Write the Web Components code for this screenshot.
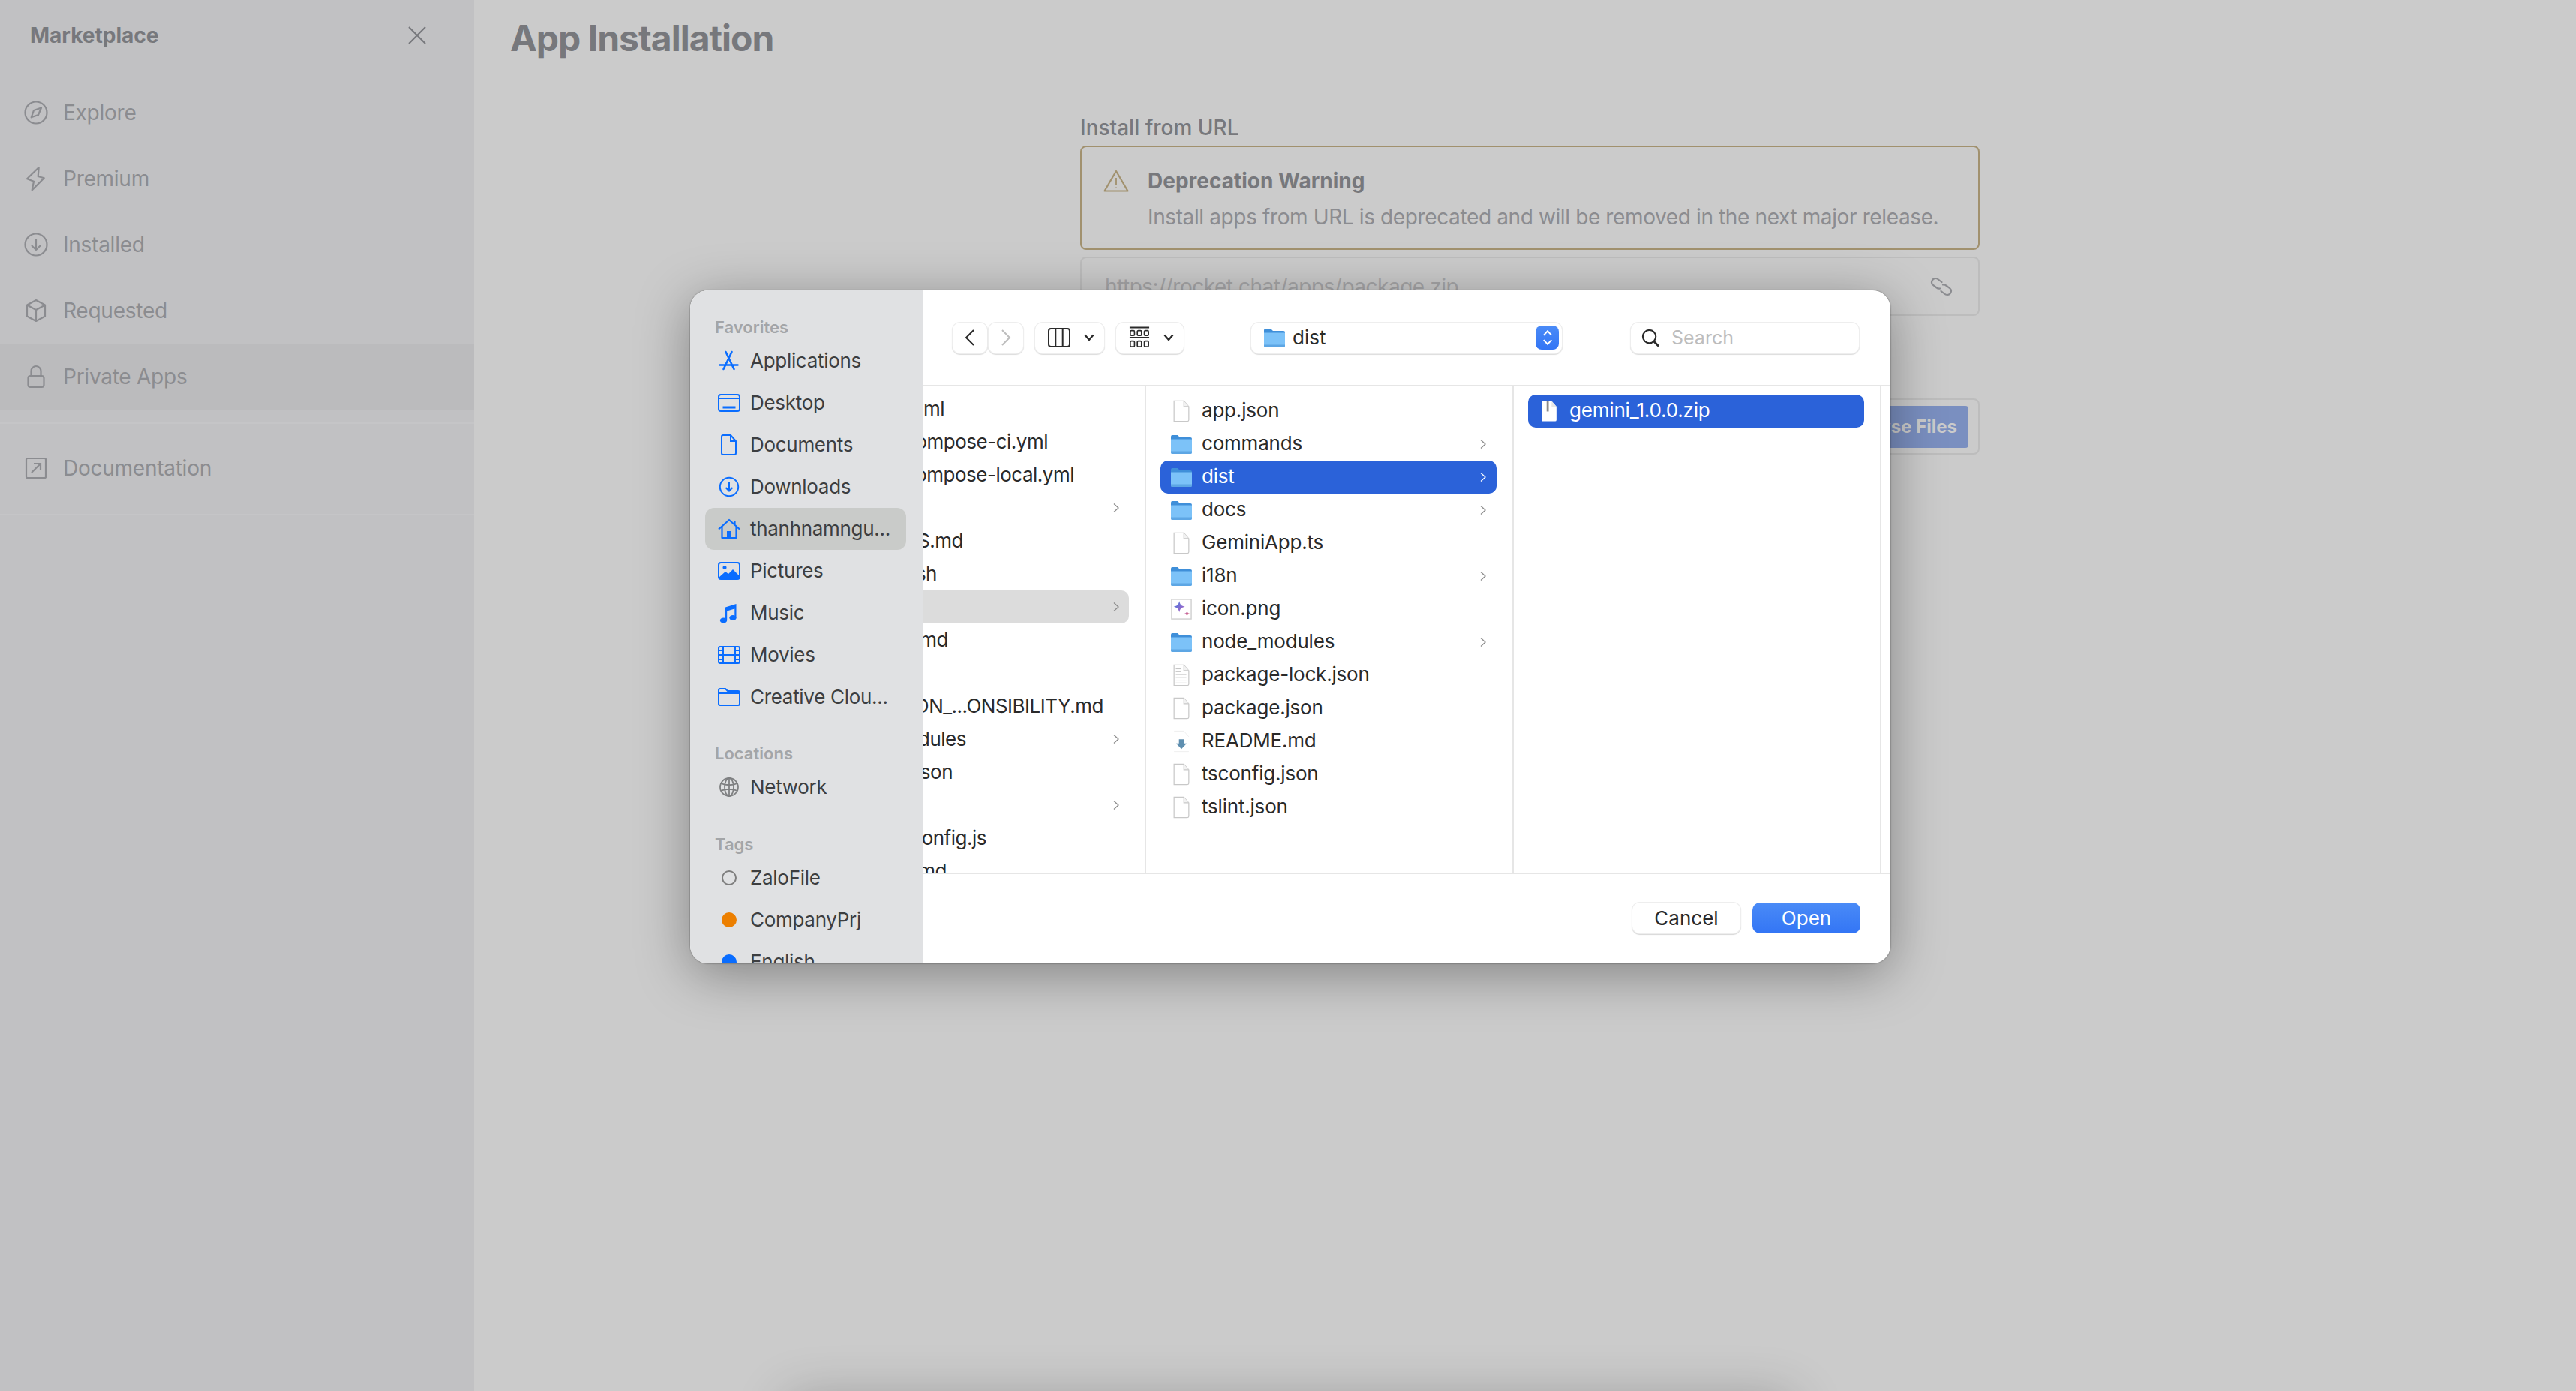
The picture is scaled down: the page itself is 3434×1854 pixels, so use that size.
<!doctype html>
<html lang="en">
<head>
<meta charset="utf-8">
<title>App Installation</title>
<style>
  html, body { margin: 0; width: 3434px; height: 1854px; overflow: hidden; background: #cbcbcb; }
  body { font-family: Inter, "Liberation Sans", sans-serif; }
</style>
</head>
<body>
<rc-page>
  <rc-sidebar slot="sidebar" heading="Marketplace">
    <rc-nav-item icon="compass">Explore</rc-nav-item>
    <rc-nav-item icon="bolt">Premium</rc-nav-item>
    <rc-nav-item icon="install">Installed</rc-nav-item>
    <rc-nav-item icon="cube">Requested</rc-nav-item>
    <rc-nav-item icon="lock" active>Private Apps</rc-nav-item>
    <rc-divider></rc-divider>
    <rc-nav-item icon="external">Documentation</rc-nav-item>
    <rc-divider></rc-divider>
  </rc-sidebar>
  <rc-install-form slot="main" heading="App Installation"></rc-install-form>
  <mac-file-dialog slot="dialog">
    <mac-side-heading>Favorites</mac-side-heading>
    <mac-side-item icon="apps">Applications</mac-side-item>
    <mac-side-item icon="desktop">Desktop</mac-side-item>
    <mac-side-item icon="document">Documents</mac-side-item>
    <mac-side-item icon="download">Downloads</mac-side-item>
    <mac-side-item icon="home" active>thanhnamngu...</mac-side-item>
    <mac-side-item icon="pictures">Pictures</mac-side-item>
    <mac-side-item icon="music">Music</mac-side-item>
    <mac-side-item icon="movies">Movies</mac-side-item>
    <mac-side-item icon="folderline">Creative Clou...</mac-side-item>
    <mac-side-heading style="margin-top:30px">Locations</mac-side-heading>
    <mac-side-item icon="globe">Network</mac-side-item>
    <mac-side-heading style="margin-top:31px">Tags</mac-side-heading>
    <mac-side-item icon="tagempty">ZaloFile</mac-side-item>
    <mac-side-item icon="tagorange">CompanyPrj</mac-side-item>
    <mac-side-item icon="tagblue">English</mac-side-item>
  </mac-file-dialog>
</rc-page>

<script>
// all icons live here, drawn on their own viewBox
const ICONS = {
  compass: '<svg viewBox="0 0 32 32" fill="none" stroke="currentColor" stroke-width="2.200" stroke-linejoin="round"><circle cx="16" cy="16" r="14.500"/><path d="M23 9.500 19 19l-9.300 3.300L13 13z"/></svg>',
  bolt: '<svg viewBox="0 0 32 32" fill="none" stroke="currentColor" stroke-width="2.200" stroke-linejoin="round"><path d="M19.700 1 18.700 13l8 2.300-16 16L13 19.700 4 16.300z"/></svg>',
  install: '<svg viewBox="0 0 32 32" fill="none" stroke="currentColor" stroke-width="2.200"><circle cx="16" cy="16" r="14.500"/><path d="M16 8v15M10 17l6 6 6-6"/></svg>',
  cube: '<svg viewBox="0 0 32 32" fill="none" stroke="currentColor" stroke-width="2.200" stroke-linejoin="round"><path d="M16 2 28 8.500v15L16 30 4 23.500v-15zM4 8.500l12 6.500 12-6.500M16 15v15"/></svg>',
  lock: '<svg viewBox="0 0 32 32" fill="none" stroke="currentColor" stroke-width="2.200"><rect x="5.500" y="15" width="21" height="15" rx="3"/><path d="M9.500 15V8.500a6.500 6.500 0 0 1 13 0V15"/></svg>',
  external: '<svg viewBox="0 0 32 32" fill="none" stroke="currentColor" stroke-width="2.200"><rect x="3" y="3" width="26" height="26" rx="1.500"/><path d="M10 22 22 10M13 10h9v9"/></svg>',
  close: '<svg viewBox="0 0 26 26" fill="none" stroke="currentColor" stroke-width="2"><path d="M2 2l22 22M24 2 2 24"/></svg>',
  warning: '<svg viewBox="0 0 34 30" fill="none" stroke="#a1916e" stroke-width="2.200" stroke-linejoin="round"><path d="M17 2 32.500 28.500h-31z"/><path d="M17 11v9.500M17 23.500v1.500" stroke-width="1.800"/></svg>',
  link: '<svg viewBox="0 0 30 26" fill="none" stroke="currentColor" stroke-width="2.200" stroke-linecap="round"><path d="M13 15.500C11.500 16 10 15.500 8 14L3.500 10.500C.5 8 2.500 2 7 2 9 2 10 2.500 11 3.500L15.500 7"/><path d="M17 10.500C18.500 10 20 10.500 22 12L26.500 15.500C29.500 18 27.500 24 23 24 21 24 20 23.500 19 22.500L14.500 19"/></svg>',

  apps: '<svg viewBox="0 0 30 30" fill="none" stroke="currentColor" stroke-width="2.600" stroke-linecap="round"><path d="M10.500 3 21.500 26M18.500 3 7.500 26M2.500 20.500h24"/></svg>',
  desktop: '<svg viewBox="0 0 30 30" fill="none" stroke="currentColor" stroke-width="2"><rect x="1" y="4" width="28" height="22" rx="3"/><path d="M1 9h28"/><path d="M6.500 19.500h17v3h-17z" fill="currentColor" stroke="none"/></svg>',
  document: '<svg viewBox="0 0 30 30" fill="none" stroke="currentColor" stroke-width="2"><path d="M7 2h10l7 8v16a2 2 0 0 1-2 2H7a2 2 0 0 1-2-2V4a2 2 0 0 1 2-2zM17 2v8h7"/></svg>',
  download: '<svg viewBox="0 0 30 30" fill="none" stroke="currentColor" stroke-width="2"><circle cx="15" cy="15" r="12.200"/><path d="M15 8.500v12M10.500 16l4.500 4.500 4.500-4.500"/></svg>',
  home: '<svg viewBox="0 0 30 30" fill="none" stroke="currentColor" stroke-width="2.200" stroke-linejoin="round"><path d="M1 15.500 15 3l14 12.500M5.500 12.500V27h19V12.500M22.500 10V4.500"/><path d="M12 27v-9h6v9z" fill="currentColor" stroke="none"/></svg>',
  pictures: '<svg viewBox="0 0 30 30"><rect x="1" y="4" width="28" height="22" rx="3" fill="none" stroke="currentColor" stroke-width="2"/><circle cx="9" cy="10.500" r="2.500" fill="currentColor"/><path d="M1.500 23.500 10 16l4 3 6-6 8.500 8.500V24a1.500 1.500 0 0 1-1.500 1.500H3z" fill="currentColor"/></svg>',
  music: '<svg viewBox="0 0 30 30" fill="currentColor"><path d="M10 7.500 24.500 3v18h-2.200V9.500L12.200 12.500V25h-2.200z"/><ellipse cx="7.500" cy="25" rx="4.700" ry="3.500"/><ellipse cx="20" cy="21.500" rx="4.700" ry="3.500"/></svg>',
  movies: '<svg viewBox="0 0 30 30" fill="none" stroke="currentColor" stroke-width="2"><rect x="1" y="4" width="28" height="22" rx="2"/><path d="M7 4v22M23 4v22M7 15h16M1 9h6M1 15h6M1 21h6M23 9h6M23 15h6M23 21h6"/></svg>',
  folderline: '<svg viewBox="0 0 30 30" fill="none" stroke="currentColor" stroke-width="2"><path d="M1 8V6a2 2 0 0 1 2-2h7l3 3h14a2 2 0 0 1 2 2v15a2 2 0 0 1-2 2H3a2 2 0 0 1-2-2zM1 10h28"/></svg>',
  globe: '<svg viewBox="0 0 30 30" fill="none" stroke="#7f8082" stroke-width="1.800"><circle cx="15" cy="15" r="12"/><ellipse cx="15" cy="15" rx="6" ry="12"/><path d="M4 10c6 3 16 3 22 0M4 20c6-3 16-3 22 0M15 3v24"/></svg>',
  tagempty: '<svg viewBox="0 0 30 30"><circle cx="15" cy="15" r="9" fill="none" stroke="#7e7e7e" stroke-width="2"/></svg>',
  tagorange: '<svg viewBox="0 0 30 30"><circle cx="15" cy="15" r="10" fill="#ec7f00"/></svg>',
  tagblue: '<svg viewBox="0 0 30 30"><circle cx="15" cy="15" r="10" fill="#0a6dff"/></svg>',

  folder: '<svg viewBox="0 0 28 28"><path d="M0 4a2 2 0 0 1 2-2h7l3 3h14a2 2 0 0 1 2 2v6H0z" fill="#3f8fd9"/><path d="M0 7.500h28V25a2 2 0 0 1-2 2H2a2 2 0 0 1-2-2z" fill="#7cc2f8"/><path d="M0 23.500h28V25a2 2 0 0 1-2 2H2a2 2 0 0 1-2-2z" fill="#5da6e4"/></svg>',
  file: '<svg viewBox="0 0 28 32"><path d="M3.500 1.500h14l7 8v19a2 2 0 0 1-2 2h-19z" fill="#fff" stroke="#c8c8c8" stroke-width="1.300"/><path d="M17.500 1.500v8h7" fill="#f2f2f2" stroke="#c8c8c8" stroke-width="1.300"/></svg>',
  filelines: '<svg viewBox="0 0 28 32"><path d="M3.500 1.500h14l7 8v19a2 2 0 0 1-2 2h-19z" fill="#fff" stroke="#c8c8c8" stroke-width="1.300"/><path d="M17.500 1.500v8h7" fill="#f2f2f2" stroke="#c8c8c8" stroke-width="1.300"/><path d="M6 7h8M6 11h8M6 15h15M6 19h15M6 23h15M6 27h15" stroke="#bcbcbc" stroke-width="1"/></svg>',
  readme: '<svg viewBox="0 0 28 32"><path d="M3.500 1.500h14l7 8" fill="none" stroke="#eee" stroke-width="1"/><path d="M3.500 30.500h21" stroke="#eee" stroke-width="1"/><path d="M10.500 13h7v6h4L14 27l-7.500-8h4z" fill="#5f8fb0"/></svg>',
  image: '<svg viewBox="0 0 30 30"><defs><linearGradient id="g" x1="0" y1="0" x2="1" y2="1"><stop offset="0" stop-color="#3d7be0"/><stop offset=".6" stop-color="#a765c8"/><stop offset="1" stop-color="#e86a6a"/></linearGradient></defs><rect x="1" y="1" width="28" height="28" fill="#fff" stroke="#cfcfcf" stroke-width="1.500"/><path d="M12 3.500c1 5 3 7 8 8-5 1-7 3-8 8-1-5-3-7-8-8 5-1 7-3 8-8zM23 17.500c.5 2.500 1.500 3.500 4 4-2.500.5-3.500 1.500-4 4-.5-2.500-1.500-3.500-4-4 2.500-.5 3.500-1.500 4-4z" fill="url(#g)"/></svg>',
  zip: '<svg viewBox="0 0 28 32"><path d="M3.500 1.500h14l7 8v19a2 2 0 0 1-2 2h-19z" fill="#fff"/><path d="M17.500 1.500v8h7" fill="#e6e6e6"/><path d="M10.500 1.500h3v15h-3z" fill="#8a8a8a"/></svg>',
  chevron: '<svg viewBox="0 0 8 14" fill="none" stroke="currentColor" stroke-width="1.300"><path d="M1 1.500 7 7l-6 5.500"/></svg>',
  back: '<svg viewBox="0 0 14 24" fill="none" stroke="currentColor" stroke-width="2"><path d="M12 2 2 12l10 10"/></svg>',
  forward: '<svg viewBox="0 0 14 24" fill="none" stroke="currentColor" stroke-width="2"><path d="M2 2l10 10L2 22"/></svg>',
  columns: '<svg viewBox="0 0 30 26" fill="none" stroke="currentColor" stroke-width="2"><rect x="1" y="1" width="28" height="24" rx="3"/><path d="M10.300 1v24M19.700 1v24"/></svg>',
  grid: '<svg viewBox="0 0 30 32" fill="none" stroke="currentColor" stroke-width="1.800"><path d="M1 1.500h28M1 16h28" stroke-width="2"/><rect x="2" y="6" width="6" height="7" rx="1.500"/><rect x="12" y="6" width="6" height="7" rx="1.500"/><rect x="22" y="6" width="6" height="7" rx="1.500"/><rect x="2" y="21" width="6" height="8" rx="1.500"/><rect x="12" y="21" width="6" height="8" rx="1.500"/><rect x="22" y="21" width="6" height="8" rx="1.500"/></svg>',
  caret: '<svg viewBox="0 0 14 10" fill="none" stroke="currentColor" stroke-width="2.400"><path d="M1.500 1.500 7 8l5.500-6.500"/></svg>',
  search: '<svg viewBox="0 0 26 26" fill="none" stroke="#2a2a2a" stroke-width="2.200"><circle cx="11" cy="11" r="9"/><path d="M17 17.500l7 7" stroke-width="3"/></svg>',
  stepper: '<svg viewBox="0 0 16 26" fill="none" stroke="#fff" stroke-width="2.200"><path d="M2 9.500 8 3l6 6.500M2 16.500 8 23l6-6.500"/></svg>'
};

function iconSvg(name) {
  return ICONS[name] || '';
}

// small helper so each element below stays a short class
function shadow(el, html) {
  el.attachShadow({ mode: 'open' }).innerHTML = html;
}

class RcPage extends HTMLElement {
  constructor() {
    super();
    shadow(this, `
      <style>
        :host { display: flex; position: relative; width: 3434px; height: 1854px; overflow: hidden; background: #cbcbcb; }
        .main { flex: 1; min-width: 0; }
        .dialog { position: absolute; left: 920px; top: 387px; }
        /* blurred window edge coming up from below the visible area */
        .peek { position: absolute; left: 1070px; top: 1884px; width: 1300px; height: 60px; box-shadow: 0 0 70px 20px rgba(0,0,0,.24); background: rgba(0,0,0,.24); }
      </style>
      <slot name="sidebar"></slot>
      <div class="main"><slot name="main"></slot></div>
      <div class="peek"></div>
      <div class="dialog"><slot name="dialog"></slot></div>
    `);
  }
}

class RcSidebar extends HTMLElement {
  constructor() {
    super();
    shadow(this, `
      <style>
        :host { display: block; width: 632px; height: 100%; background: #c1c1c3; flex: none; }
        header { height: 94px; display: flex; align-items: center; justify-content: space-between; padding: 0 63px 0 40px; margin-bottom: 12px;
          font-size: 28px; font-weight: 700; color: #77787c; }
        svg { display: block; width: 26px; height: 26px; color: #77787c; }
      </style>
      <header><span>${this.getAttribute('heading') || ''}</span>${iconSvg('close')}</header>
      <slot></slot>
    `);
  }
}

class RcNavItem extends HTMLElement {
  constructor() {
    super();
    shadow(this, `
      <style>
        :host { display: flex; align-items: center; height: 88px; padding-left: 32px; gap: 20px; font-size: 28px; letter-spacing: -.25px; color: #8b8c90; }
        :host([active]) { background: #bbbbbd; }
        svg { display: block; width: 32px; height: 32px; }
      </style>
      ${iconSvg(this.getAttribute('icon'))}<slot></slot>
    `);
  }
}

class RcDivider extends HTMLElement {
  constructor() {
    super();
    shadow(this, `<style>:host { display: block; height: 2px; margin: 17px 0 15px; background: #c5c5c7; }</style>`);
  }
}

class RcInstallForm extends HTMLElement {
  constructor() {
    super();
    shadow(this, `
      <style>
        :host { display: block; color: #77787c; }
        h1 { margin: 0; height: 100px; display: flex; align-items: center; padding-left: 48px; font-size: 48px; font-weight: 700; letter-spacing: -1px; }
        .form { width: 1199px; margin: 50px 0 0 808px; }
        label { display: block; height: 40px; line-height: 40px; font-size: 28px; font-weight: 500; margin-bottom: 4px; }
        .warn { box-sizing: border-box; height: 139px; border: 2px solid #a1916e; border-radius: 8px; display: flex; padding: 27px 28px 0 29px; gap: 25px; }
        .warn svg { width: 34px; height: 30px; flex: none; margin-top: 3px; }
        .warn b { display: block; font-size: 28px; line-height: 36px; font-weight: 700; }
        .warn span { display: block; font-size: 28px; line-height: 36px; margin-top: 12px; color: #8b8c90; letter-spacing: -.38px; white-space: nowrap; }
        .url { box-sizing: border-box; height: 79px; margin-top: 9px; border: 2px solid #bdbdbd; border-radius: 8px; display: flex; align-items: center; justify-content: space-between;
          padding: 0 34px 0 31px; font-size: 28px; letter-spacing: -.5px; color: #a6a6a8; }
        .url svg { width: 30px; height: 26px; color: #8b8c90; }
        .upload { box-sizing: border-box; height: 75px; margin-top: 110px; border: 2px solid #bdbdbd; border-radius: 8px; display: flex; align-items: center; justify-content: flex-end; padding-right: 13px; }
        button { all: unset; height: 56px; padding: 0 15px; display: flex; align-items: center; background: #7a8fc0; border-radius: 4px; font-size: 24px; font-weight: 700; color: #cbcbcb; font-family: inherit; }
      </style>
      <h1>${this.getAttribute('heading') || ''}</h1>
      <div class="form">
        <label>Install from URL</label>
        <div class="warn">${iconSvg('warning')}<div><b>Deprecation Warning</b><span>Install apps from URL is deprecated and will be removed in the next major release.</span></div></div>
        <div class="url"><span>https://rocket.chat/apps/package.zip</span>${iconSvg('link')}</div>
        <div class="upload"><button>Browse Files</button></div>
      </div>
    `);
  }
}

class MacFileDialog extends HTMLElement {
  constructor() {
    super();
    shadow(this, `
      <style>
        :host { display: block; width: 1600px; height: 897px; border-radius: 24px; box-shadow: 0 0 2px rgba(0,0,0,.55), 0 14px 70px rgba(0,0,0,.36); }
        .win { display: flex; width: 100%; height: 100%; border-radius: 24px; overflow: hidden; background: #fff; color: #2a2a2a; font-size: 26px; }
        aside { width: 310px; flex: none; box-sizing: border-box; padding-top: 32px; background: #e0e1e3; overflow: hidden; }
        .right { flex: 1; min-width: 0; display: flex; flex-direction: column; }
        .bar { height: 126px; flex: none; box-sizing: border-box; display: flex; align-items: center; padding: 0 42px 0 40px; border-bottom: 0; }
        .rule { height: 2px; background: #e6e6e6; flex: none; }
        .browser { height: 648px; display: flex; flex: none; overflow: hidden; }
        .foot { flex: 1; display: flex; justify-content: flex-end; gap: 16px; padding: 38px 40px 0 0; }
        mac-tool + mac-tool { margin-left: 16px; }
        mac-tool.pair { margin-left: 2px; }
      </style>
      <div class="win">
        <aside><slot></slot></aside>
        <div class="right">
          <div class="bar">
            <mac-tool w="46" icon="back" iw="14" ih="24"></mac-tool>
            <mac-tool class="pair" w="46" icon="forward" iw="14" ih="24" dim></mac-tool>
            <mac-tool w="92" icon="columns" iw="30" ih="26" caret></mac-tool>
            <mac-tool w="90" icon="grid" iw="28" ih="30" caret></mac-tool>
            <mac-path label="dist"></mac-path>
            <mac-search></mac-search>
          </div>
          <div class="rule"></div>
          <div class="browser">
            <mac-column width="298" top="8" pad="0">
              <mac-clip-row end="1259">yml</mac-clip-row>
              <mac-clip-row end="1397">ompose-ci.yml</mac-clip-row>
              <mac-clip-row end="1432">ompose-local.yml</mac-clip-row>
              <mac-clip-row chevron></mac-clip-row>
              <mac-clip-row end="1284">S.md</mac-clip-row>
              <mac-clip-row end="1249">sh</mac-clip-row>
              <mac-clip-row chevron path></mac-clip-row>
              <mac-clip-row end="1264">md</mac-clip-row>
              <mac-clip-row></mac-clip-row>
              <mac-clip-row end="1471">ON_...ONSIBILITY.md</mac-clip-row>
              <mac-clip-row end="1288" chevron>dules</mac-clip-row>
              <mac-clip-row end="1270">son</mac-clip-row>
              <mac-clip-row chevron></mac-clip-row>
              <mac-clip-row end="1315">onfig.js</mac-clip-row>
              <mac-clip-row end="1262">md</mac-clip-row>
            </mac-column>
            <mac-column width="490" top="11" pad="19">
              <mac-file-row icon="file">app.json</mac-file-row>
              <mac-file-row icon="folder" chevron>commands</mac-file-row>
              <mac-file-row icon="folder" chevron selected>dist</mac-file-row>
              <mac-file-row icon="folder" chevron>docs</mac-file-row>
              <mac-file-row icon="file">GeminiApp.ts</mac-file-row>
              <mac-file-row icon="folder" chevron>i18n</mac-file-row>
              <mac-file-row icon="image">icon.png</mac-file-row>
              <mac-file-row icon="folder" chevron>node_modules</mac-file-row>
              <mac-file-row icon="filelines">package-lock.json</mac-file-row>
              <mac-file-row icon="file">package.json</mac-file-row>
              <mac-file-row icon="readme">README.md</mac-file-row>
              <mac-file-row icon="file">tsconfig.json</mac-file-row>
              <mac-file-row icon="file">tslint.json</mac-file-row>
            </mac-column>
            <mac-column width="490" top="11" pad="19">
              <mac-file-row icon="zip" selected>gemini_1.0.0.zip</mac-file-row>
            </mac-column>
          </div>
          <div class="rule"></div>
          <div class="foot">
            <mac-button>Cancel</mac-button>
            <mac-button primary>Open</mac-button>
          </div>
        </div>
      </div>
    `);
  }
}

class MacSideHeading extends HTMLElement {
  constructor() {
    super();
    shadow(this, `<style>:host { display: block; height: 34px; line-height: 34px; padding-left: 33px; font-size: 22px; font-weight: 600; color: #a3a5a8; }</style><slot></slot>`);
  }
}

class MacSideItem extends HTMLElement {
  constructor() {
    super();
    shadow(this, `
      <style>
        :host { display: flex; align-items: center; box-sizing: border-box; width: 268px; height: 56px; margin-left: 20px; padding: 0 0 1px 14px; gap: 10px;
          border-radius: 12px; font-size: 26px; letter-spacing: -.3px; color: #3d3e40; white-space: nowrap; }
        :host([active]) { background: #c9cbc9; }
        span { display: flex; width: 36px; height: 30px; justify-content: center; color: #0a6dff; flex: none; }
        svg { width: 30px; height: 30px; }
      </style>
      <span>${iconSvg(this.getAttribute('icon'))}</span><slot></slot>
    `);
  }
}

class MacTool extends HTMLElement {
  constructor() {
    super();
    const w = this.getAttribute('w');
    const iw = this.getAttribute('iw');
    const ih = this.getAttribute('ih');
    const color = this.hasAttribute('dim') ? '#bdbdbd' : '#2a2a2a';
    const hasCaret = this.hasAttribute('caret');
    shadow(this, `
      <style>
        :host { display: flex; box-sizing: border-box; width: ${w}px; height: 41px; align-items: center; justify-content: ${hasCaret ? 'flex-start' : 'center'}; padding-left: ${hasCaret ? 17 : 0}px; gap: 18px; background: #fff; border-radius: 10px;
          box-shadow: 0 0 0 1px #eeeeee, 0 1px 1px 1px rgba(0,0,0,.14); color: ${color}; flex: none; }
        .i svg { display: block; width: ${iw}px; height: ${ih}px; }
        .c svg { display: block; width: 14px; height: 10px; }
      </style>
      <span class="i">${iconSvg(this.getAttribute('icon'))}</span>
      ${hasCaret ? `<span class="c">${iconSvg('caret')}</span>` : ''}
    `);
  }
}

class MacPath extends HTMLElement {
  constructor() {
    super();
    shadow(this, `
      <style>
        :host { display: flex; box-sizing: border-box; width: 414px; height: 41px; margin-left: 90px; align-items: center; padding: 0 4px 0 17px; gap: 10px; background: #fff; border-radius: 10px;
          box-shadow: 0 0 0 1px #eeeeee, 0 1px 1px 1px rgba(0,0,0,.14); color: #2a2a2a; font-size: 26px; flex: none; }
        .f svg { display: block; width: 28px; height: 28px; }
        .label { flex: 1; padding-bottom: 2px; }
        .step { width: 31px; height: 32px; border-radius: 8px; background: linear-gradient(#4a8bf7, #3375f5); display: flex; align-items: center; justify-content: center; }
        .step svg { width: 14px; height: 24px; }
      </style>
      <span class="f">${iconSvg('folder')}</span><span class="label">${this.getAttribute('label')}</span><span class="step">${iconSvg('stepper')}</span>
    `);
  }
}

class MacSearch extends HTMLElement {
  constructor() {
    super();
    shadow(this, `
      <style>
        :host { display: flex; box-sizing: border-box; width: 304px; height: 41px; margin-left: 92px; align-items: center; padding-left: 14px; gap: 15px; background: #fff; border-radius: 10px;
          box-shadow: 0 0 0 1px #eeeeee, 0 1px 1px 1px rgba(0,0,0,.14); color: #bdbdbd; font-size: 25px; flex: none; }
        svg { display: block; width: 25px; height: 25px; }
      </style>
      ${iconSvg('search')}<span>Search</span>
    `);
  }
}

class MacColumn extends HTMLElement {
  constructor() {
    super();
    const pad = this.getAttribute('pad');
    shadow(this, `
      <style>
        :host { display: block; box-sizing: border-box; width: ${this.getAttribute('width')}px; height: 100%; flex: none; overflow: hidden;
          padding: ${this.getAttribute('top')}px 21px 0 ${pad}px; border-right: 2px solid #e6e6e6; }
      </style>
      <slot></slot>
    `);
  }
}

class MacFileRow extends HTMLElement {
  constructor() {
    super();
    shadow(this, `
      <style>
        :host { display: flex; align-items: center; height: 44px; padding: 0 14px; gap: 13px; border-radius: 10px; font-size: 26px; letter-spacing: -.2px; color: #2a2a2a; white-space: nowrap; }
        :host([selected]) { background: #2b62d9; color: #fff; }
        .i { width: 28px; height: 30px; display: flex; align-items: center; justify-content: center; flex: none; }
        .i svg { display: block; width: 28px; height: 30px; }
        .t { flex: 1; padding-bottom: 3px; }
        .c { display: flex; color: #8a8a8a; }
        :host([selected]) .c { color: #fff; }
        .c svg { display: block; width: 8px; height: 14px; }
      </style>
      <span class="i">${iconSvg(this.getAttribute('icon'))}</span>
      <span class="t"><slot></slot></span>
      ${this.hasAttribute('chevron') ? `<span class="c">${iconSvg('chevron')}</span>` : ''}
    `);
  }
}

// rows of the first column: scrolled under the sidebar, so text is anchored by its right end
class MacClipRow extends HTMLElement {
  constructor() {
    super();
    const end = Number(this.getAttribute('end')) || 1230;
    shadow(this, `
      <style>
        :host { display: flex; align-items: center; height: 44px; padding-right: 13px; font-size: 26px; letter-spacing: -.5px; color: #2a2a2a; white-space: nowrap; border-radius: 0 10px 10px 0; }
        :host([path]) { background: #dcdcdc; }
        .t { width: ${end - 1230}px; display: flex; justify-content: flex-end; flex: none; padding-bottom: 2px; }
        .s { flex: 1; }
        .c { display: flex; color: #8a8a8a; }
        .c svg { display: block; width: 8px; height: 14px; }
      </style>
      <span class="t"><slot></slot></span><span class="s"></span>
      ${this.hasAttribute('chevron') ? `<span class="c">${iconSvg('chevron')}</span>` : ''}
    `);
  }
}

class MacButton extends HTMLElement {
  constructor() {
    super();
    shadow(this, `
      <style>
        :host { display: flex; box-sizing: border-box; width: 144px; height: 41px; align-items: center; justify-content: center; background: #fff; border-radius: 10px;
          box-shadow: 0 0 0 1px #eeeeee, 0 1px 1px 1px rgba(0,0,0,.16); font-size: 26px; color: #2a2a2a; flex: none; }
        :host([primary]) { background: linear-gradient(#4a8bf7, #3375f5); color: #fff; box-shadow: none; }
      </style>
      <slot></slot>
    `);
  }
}

customElements.define('mac-tool', MacTool);
customElements.define('mac-path', MacPath);
customElements.define('mac-search', MacSearch);
customElements.define('mac-column', MacColumn);
customElements.define('mac-file-row', MacFileRow);
customElements.define('mac-clip-row', MacClipRow);
customElements.define('mac-button', MacButton);
customElements.define('mac-side-heading', MacSideHeading);
customElements.define('mac-side-item', MacSideItem);
customElements.define('mac-file-dialog', MacFileDialog);
customElements.define('rc-nav-item', RcNavItem);
customElements.define('rc-divider', RcDivider);
customElements.define('rc-sidebar', RcSidebar);
customElements.define('rc-install-form', RcInstallForm);
customElements.define('rc-page', RcPage);
</script>
</body>
</html>
